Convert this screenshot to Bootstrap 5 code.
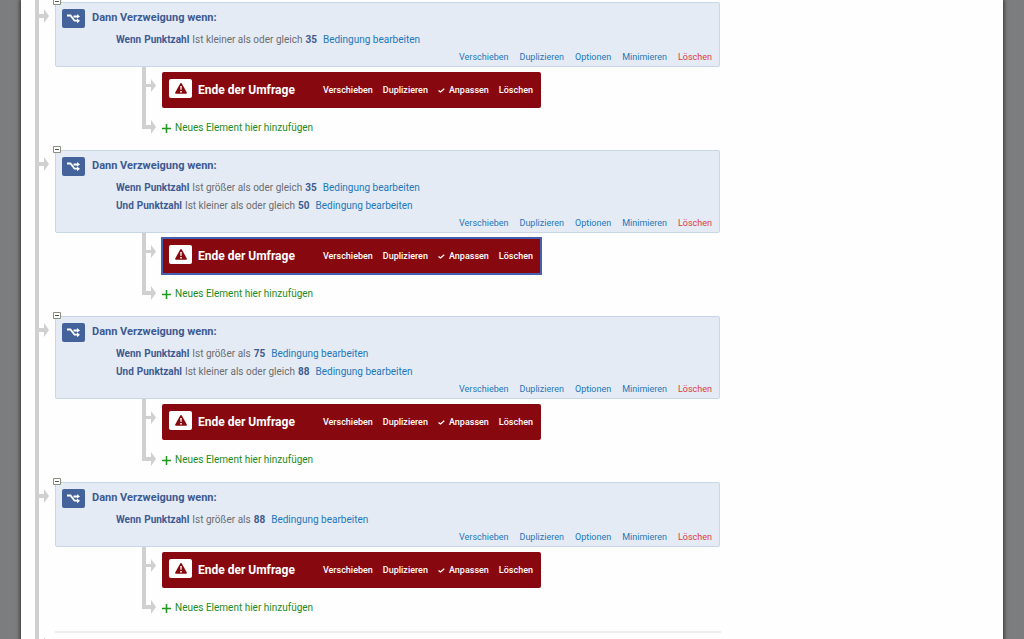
<!DOCTYPE html>
<html lang="de">
<head>
<meta charset="utf-8">
<meta name="viewport" content="width=device-width, initial-scale=1">
<title>Umfragenverlauf</title>
<link href="https://cdn.jsdelivr.net/npm/bootstrap@5.3.0/dist/css/bootstrap.min.css" rel="stylesheet">
<style>
  body { font-family: Roboto, "Liberation Sans", Arial, sans-serif; font-size: 10px; line-height: 18px; color: #6b6d70; background: #7c7d7e; }
  .flow-panel { margin: 0 21px; padding-left: 14px; background: #fefefe; box-shadow: 0 0 4px 1px rgba(0,0,0,.6); }
  .flow-tree { border-left: 4px solid #d0d0d0; padding-top: 2px; }
  .flow-step { gap: 6px; }
  .arrow-in { flex: none; margin-top: 7px; }
  .step-body { width: 665px; max-width: 100%; }
  .branch { background: #e5ebf4; border: 1px solid #c9d6e6; border-radius: 2px; padding: 6px 7px 0 6px; }
  .toggle { top: -5px; left: -3px; width: 8px; height: 7px; line-height: 0; }
  .type-icon { width: 23px; height: 19px; border-radius: 2px; background: #44639b; flex: none; }
  .branch h2, .end-title { font-size: 12px; line-height: 18px; font-weight: 700; color: #3c5a93; margin: 0; }
  .branch h2 { font-size: 11px; }
  .branch-head { gap: 7px; }
  .rules { margin: 3px 0 0 54px; }
  .rules li { gap: 3px; }
  .rules b { color: #3f5a92; }
  .rules a { margin-left: 3px; }
  a, .act { text-decoration: none; color: #2277bb; }
  .act { border: 0; padding: 0; background: none; font-size: 9px; line-height: 17px; }
  .actions { gap: 11px; }
  .act-del { color: #dc3a3c; }
  .sub { padding-left: 87px; gap: 6px; height: 83px; }
  .end-box { width: 379px; height: 36px; margin-top: 5px; background: #88080f; border-radius: 2px; padding: 0 8px 0 7px; }
  .end-box.selected { outline: 2px solid #4460ae; outline-offset: -1px; border-radius: 0; }
  .end-box .type-icon { background: #fff; margin-bottom: 3px; }
  .end-box .end-title { color: #fff; margin-left: 6px; }
  .end-box .actions { gap: 10px; }
  .end-box .act { color: #fff; font-weight: 500; }
  .add { color: #1d8a1d; margin-top: 11px; gap: 4px; }
  .rest { border-top: 2px solid #ededed; width: 666px; margin-top: 1px; }
</style>
</head>
<body class="overflow-hidden">
<svg class="d-none" aria-hidden="true">
  <symbol id="arrow" viewBox="0 0 10 14"><path fill="#d0d0d0" d="M0 5h5V0l5 7-5 7V9H0z"/></symbol>
  <symbol id="fork" viewBox="0 0 14 68"><path fill="#d0d0d0" d="M0 0h4v17h5v-5l5 6.500-5 6.500v-5H4v38h5v-5l5 7-5 7v-5H0z"/></symbol>
  <symbol id="minus" viewBox="0 0 8 7"><path fill="#fff" stroke="#8b8f80" d="M.5.5h7v6h-7z"/><path stroke="#555" d="M2 3.5h4"/></symbol>
  <symbol id="branch" viewBox="0 0 13 11"><path fill="none" stroke="#fff" stroke-width="1.800" d="M0 2.500h3.500l4 5.200H10.500M6.500 3.500H10.500"/><path fill="#fff" d="M10 1 13 3.500 10 5.500zM10 5.500 13 7.700 10 10.200z"/></symbol>
  <symbol id="warn" viewBox="0 0 12 11"><path fill="#88080f" d="M5.2.5q.8-1 1.600 0l5 9q.4 1.200-.8 1.300H1Q-.2 10.700.2 9.500z"/><path fill="#fff" d="M5.200 3h1.600l-.3 4h-1zM5.200 8h1.600v1.500H5.200z"/></symbol>
  <symbol id="check" viewBox="0 0 7 5"><path fill="none" stroke="#fff" stroke-width="1.300" d="M.5 2.500 2.500 4 6.300.8"/></symbol>
  <symbol id="plus" viewBox="0 0 9 9"><path stroke="#1d9a1d" stroke-width="1.500" d="M0 4.500h9M4.500 0v9"/></symbol>
</svg>
<main class="flow-panel min-vh-100 d-flex">
  <div class="flow-tree flex-grow-1 d-flex flex-column" id="tree"></div>
</main>
<script src="https://cdn.jsdelivr.net/npm/bootstrap@5.3.0/dist/js/bootstrap.bundle.min.js"></script>
<script>
  const steps = [
    [['Wenn', 'Ist kleiner als oder gleich', 35]],
    [['Wenn', 'Ist größer als oder gleich', 35], ['Und', 'Ist kleiner als oder gleich', 50]],
    [['Wenn', 'Ist größer als', 75], ['Und', 'Ist kleiner als oder gleich', 88]],
    [['Wenn', 'Ist größer als', 88]]
  ];
  const selected = 1;
  const icon = (id, w, h, cls = '') => `<svg class="${cls}" width="${w}" height="${h}" aria-hidden="true"><use href="#${id}"/></svg>`;
  const rule = ([join, op, value]) => `<li class="d-flex"><b>${join}</b><b>Punktzahl</b><span>${op}</span><b>${value}</b><a href="#">Bedingung bearbeiten</a></li>`;
  const act = (label, cls = '') => `<button type="button" class="act ${cls}">${label}</button>`;
  document.getElementById('tree').innerHTML = steps.map((rules, i) => `
    <section class="flow-step d-flex align-items-start">
      ${icon('arrow', 10, 14, 'arrow-in')}
      <div class="step-body">
        <div class="branch position-relative">
          <button type="button" class="toggle position-absolute border-0 p-0 bg-transparent" aria-label="Einklappen">${icon('minus', 8, 7)}</button>
          <div class="branch-head d-flex align-items-start">
            <span class="type-icon d-flex align-items-center justify-content-center">${icon('branch', 13, 11)}</span>
            <h2>Dann Verzweigung wenn:</h2>
          </div>
          <ul class="rules list-unstyled">${rules.map(rule).join('')}</ul>
          <div class="actions d-flex justify-content-end">
            ${['Verschieben', 'Duplizieren', 'Optionen', 'Minimieren'].map(t => act(t)).join('')}${act('Löschen', 'act-del')}
          </div>
        </div>
        <div class="sub d-flex align-items-start">
          ${icon('fork', 14, 68)}
          <div>
            <div class="end-box d-flex align-items-center ${i === selected ? 'selected' : ''}">
              <span class="type-icon d-flex align-items-center justify-content-center">${icon('warn', 12, 11)}</span>
              <span class="end-title">Ende der Umfrage</span>
              <div class="actions d-flex ms-auto">
                ${act('Verschieben')}${act('Duplizieren')}${act(icon('check', 7, 5, 'me-1') + 'Anpassen')}${act('Löschen')}
              </div>
            </div>
            <a href="#" class="add d-flex align-items-center">${icon('plus', 9, 9)}Neues Element hier hinzufügen</a>
          </div>
        </div>
      </div>
    </section>`).join('') + `<section class="flow-step d-flex align-items-start">${icon('arrow', 10, 14, 'arrow-in')}<div class="rest"></div></section>`;
</script>
</body>
</html>
